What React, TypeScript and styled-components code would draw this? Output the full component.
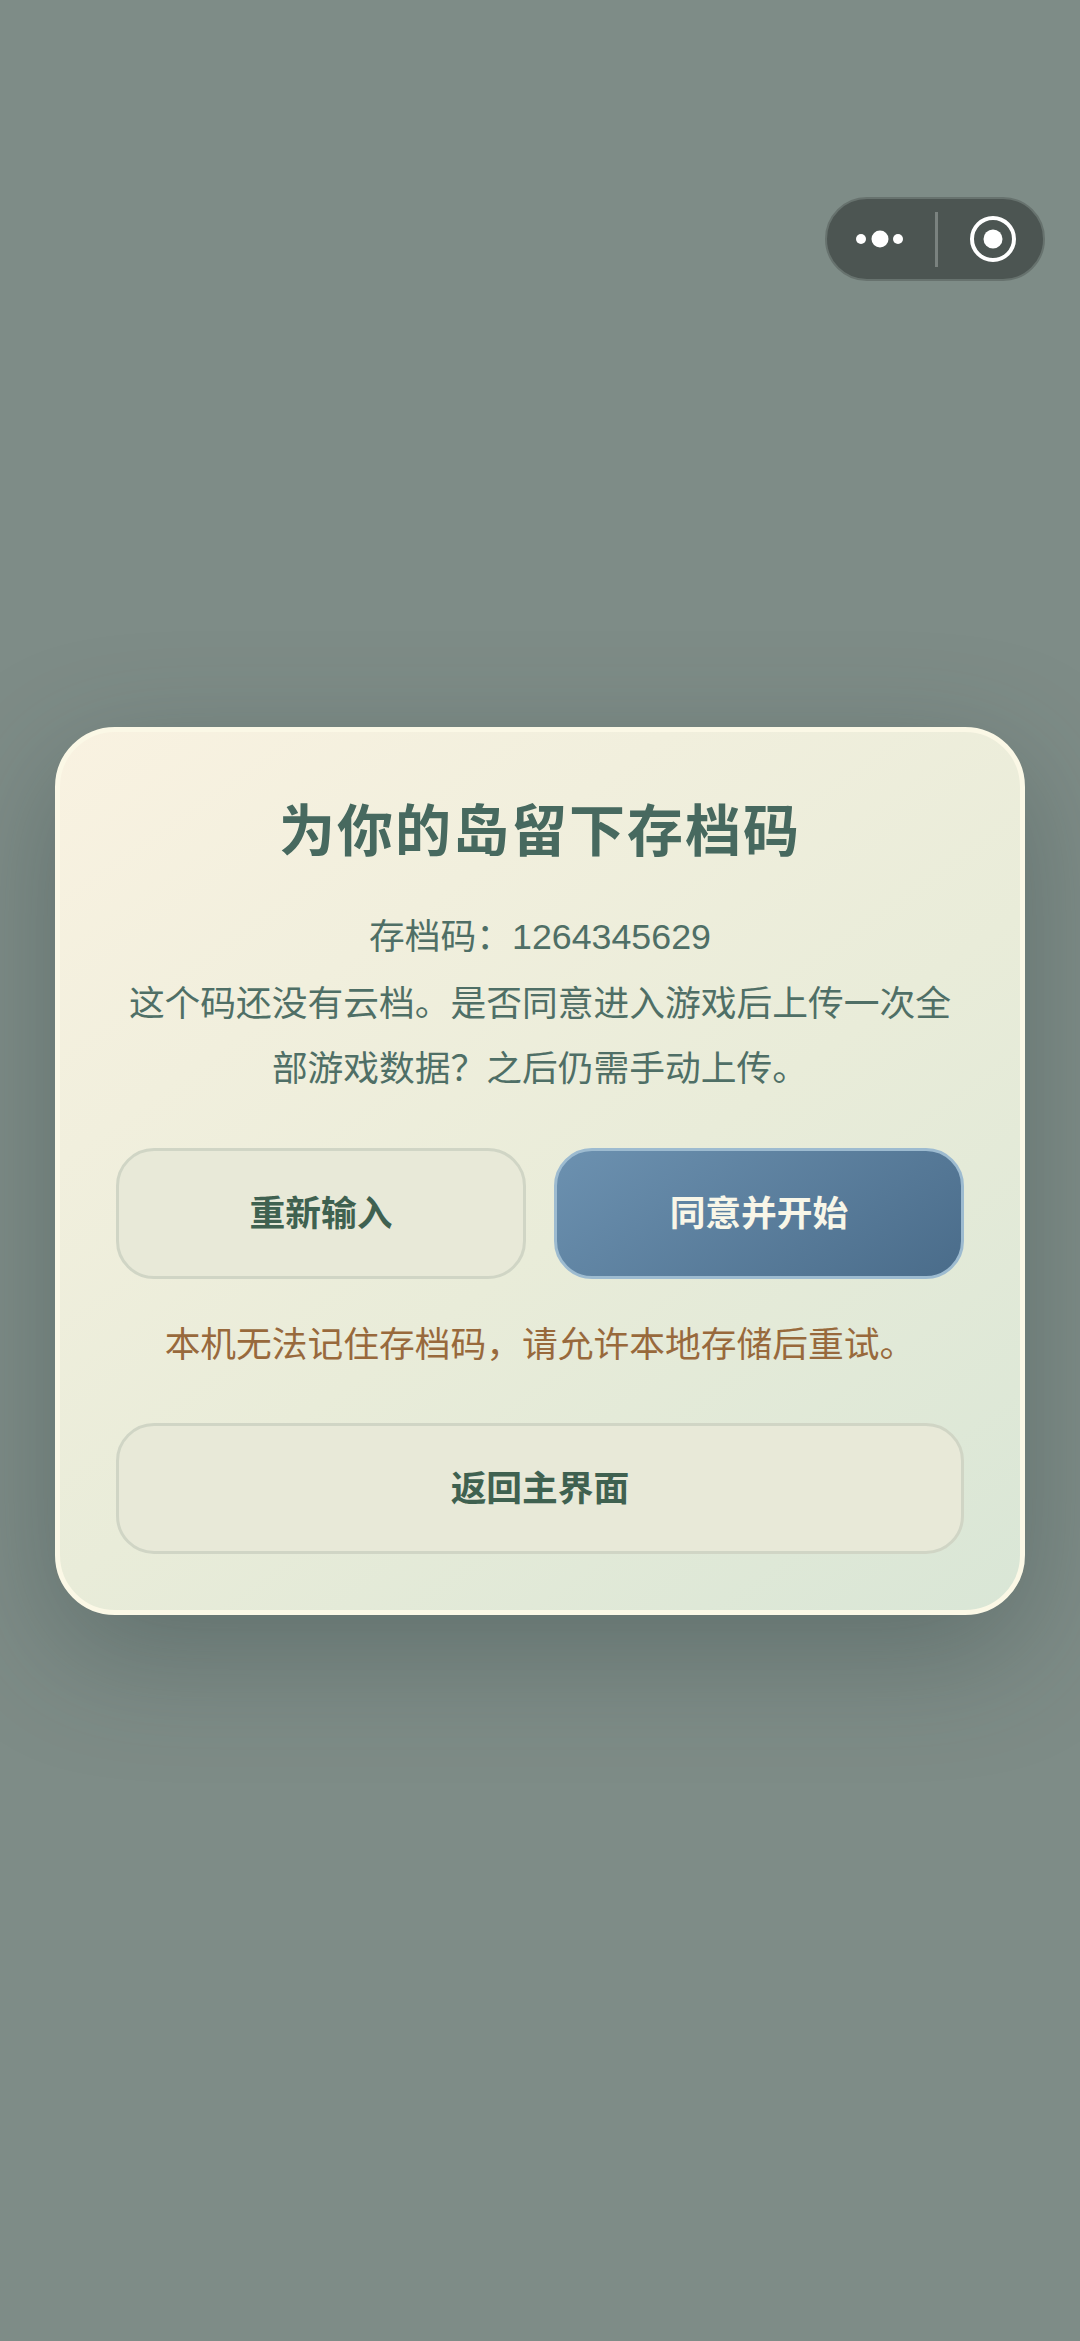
import React from 'react'
import styled, { createGlobalStyle } from 'styled-components'

const GlobalStyle = createGlobalStyle`
  html, body {
    margin: 0;
    padding: 0;
    background: #7e8c87;
  }
  * {
    box-sizing: border-box;
  }
`

const App = () => {
  return (
    <Page>
      <GlobalStyle />
      <Capsule>
        <svg width="60" height="24" viewBox="0 0 60 24">
          <circle cx="9" cy="12" r="5" fill="#fff" />
          <circle cx="28" cy="12" r="8.5" fill="#fff" />
          <circle cx="46" cy="12" r="5" fill="#fff" />
        </svg>
        <CapsuleDivider />
        <RingIcon width="48" height="48" viewBox="0 0 48 48">
          <circle cx="24" cy="24" r="21" fill="none" stroke="#fff" strokeWidth="4" />
          <circle cx="24" cy="24" r="9.5" fill="#fff" />
        </RingIcon>
      </Capsule>
      <Card>
        <Title>为你的岛留下存档码</Title>
        <CodeLine>存档码：1264345629</CodeLine>
        <Message>这个码还没有云档。是否同意进入游戏后上传一次全部游戏数据？之后仍需手动上传。</Message>
        <ButtonRow>
          <Button>重新输入</Button>
          <Button $primary>同意并开始</Button>
        </ButtonRow>
        <Warning>本机无法记住存档码，请允许本地存储后重试。</Warning>
        <Button>返回主界面</Button>
      </Card>
    </Page>
  )
}

export default App

const Page = styled.div`
  position: relative;
  min-height: 100vh;
  display: flex;
  align-items: center;
  justify-content: center;
  background: #7e8c87;
  font-family: 'Liberation Sans', 'Noto Sans CJK SC', sans-serif;
`

const Capsule = styled.div`
  position: absolute;
  top: 197px;
  left: 825px;
  width: 220px;
  height: 84px;
  display: flex;
  align-items: center;
  padding-left: 25px;
  background: #4c5552;
  border: 2px solid #67726e;
  border-radius: 42px;
`

const CapsuleDivider = styled.div`
  width: 3px;
  height: 55px;
  margin-left: 23px;
  background: #7a827f;
`

const RingIcon = styled.svg`
  margin-left: 31px;
`

const Card = styled.div`
  width: 970px;
  display: flex;
  flex-direction: column;
  padding: 61px 56px 56px;
  border: 5px solid #fbf8e6;
  border-radius: 60px;
  background: linear-gradient(145deg, #f9f2e1 0%, #e9ecd9 55%, #d9e6d6 100%);
  box-shadow: 0 36px 120px rgba(40, 60, 60, 0.34);
`

const Title = styled.h1`
  margin: 0 0 34px;
  font-size: 56px;
  line-height: 78px;
  font-weight: 700;
  letter-spacing: 2px;
  text-align: center;
  color: #47695f;
`

const CodeLine = styled.p`
  margin: 0 0 2px;
  font-size: 35.75px;
  line-height: 65px;
  text-align: center;
  color: #4f6f66;
`

const Message = styled.p`
  margin: 0 0 46px;
  font-size: 35.75px;
  line-height: 65px;
  text-align: center;
  color: #4f6f66;
`

const ButtonRow = styled.div`
  display: grid;
  grid-template-columns: 1fr 1fr;
  gap: 28px;
`

const Button = styled.button<{ $primary?: boolean }>`
  height: 131px;
  width: 100%;
  padding: 0 0 5px;
  font-family: inherit;
  font-size: 35.75px;
  font-weight: 700;
  border-radius: 38px;
  border: 3px solid ${(p) => (p.$primary ? '#9dbbd0' : '#d0d5c5')};
  background: ${(p) =>
    p.$primary ? 'linear-gradient(145deg, #6c91b0 0%, #4a6c8a 100%)' : '#e8e9d8'};
  color: ${(p) => (p.$primary ? '#f8f6e8' : '#3f6150')};
`

const Warning = styled.p`
  margin: 34px 0 45px;
  font-size: 35.75px;
  line-height: 65px;
  text-align: center;
  color: #98693c;
`
